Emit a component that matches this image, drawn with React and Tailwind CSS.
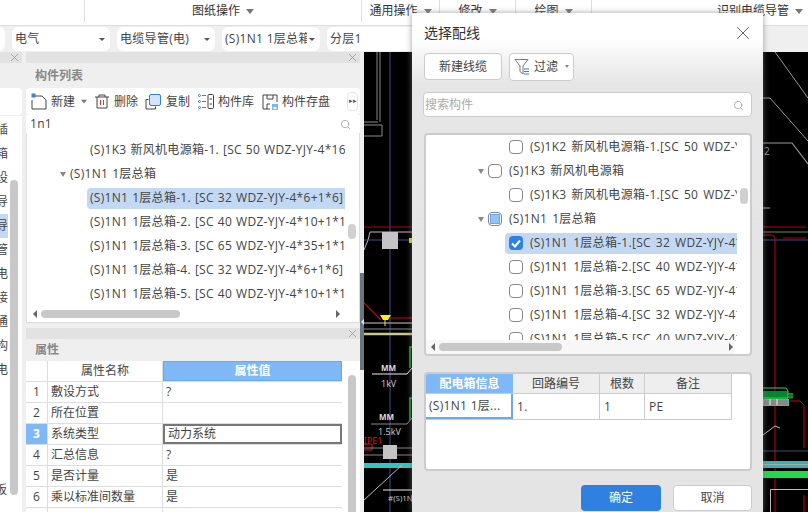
import React from 'react';
import { Search, X } from 'lucide-react';

const font = { fontFamily: '"Open Sans", "Noto Sans CJK SC", sans-serif' };

const Caret = ({ className = '' }) => (
  <span className={`inline-block w-0 h-0 border-x-[4px] border-x-transparent border-t-[5px] border-t-[#777] ${className}`} />
);

const TopSeg = ({ w, label, last }) => (
  <div className={`h-[22px] flex items-center justify-center gap-[6px] shrink-0 ${last ? '' : 'border-r border-[#ddd]'}`} style={{ width: w }}>
    <span>{label}</span>
    {label && <Caret />}
  </div>
);

const Sel = ({ w, label, arrow = true }) => (
  <div className="h-[24px] bg-white rounded-md flex items-center justify-between pl-[3px] pr-[5px] shrink-0 overflow-hidden whitespace-nowrap tracking-[0.3px]" style={{ width: w }}>
    <span className="overflow-hidden">{label}</span>
    {arrow && <span className="w-0 h-0 shrink-0 ml-[2px] border-x-[3px] border-x-transparent border-t-[3px] border-t-[#555]" />}
  </div>
);

const PanelClose = () => <X size={13} strokeWidth={1.5} className="text-[#999]" />;

const leftChars = ['插', '箱', '设', '导', '导', '管', '电', '接', '通', '构', '电'];

const LeftPanel = () => (
  <div className="w-[22px] shrink-0 flex flex-col">
    <div className="h-[11px] bg-[#e2e2e2] flex items-center justify-end pr-[1px]">
      <PanelClose />
    </div>
    <div className="h-[25px] bg-[#efefef]" />
    <div className="h-[27px] bg-white rounded-r-sm mb-[1px]" />
    <div className="flex-1 bg-white relative flex">
      <div className="w-[9px] overflow-hidden pt-[2px]">
        {leftChars.map((c, i) => (
          <div key={i} className={`h-[24px] w-[8px] flex items-center justify-end overflow-hidden ${i === 4 ? 'bg-[#c3d9f3]' : ''}`}>
            <span className="shrink-0">{c}</span>
          </div>
        ))}
        <div className="h-[96px]" />
        <div className="h-[24px] w-[7px] flex items-center justify-end overflow-hidden"><span className="shrink-0">板</span></div>
      </div>
      <div className="absolute left-[10px] top-[64px] w-[8px] h-[315px] bg-[#c8c8c8] rounded" />
    </div>
  </div>
);

const IconNew = () => (
  <svg width="16" height="17" viewBox="0 0 16 17" fill="none">
    <path d="M3 3H11L15 7V16H1V7" stroke="#444" strokeWidth="1" />
    <rect x="0.5" y="0.5" width="4" height="4" fill="#3b82d8" />
  </svg>
);
const IconDel = () => (
  <svg width="14" height="15" viewBox="0 0 14 15" fill="none">
    <path d="M0 3H14M4 3V1H10V3M2 3V14H12V3" stroke="#444" />
    <path d="M5.5 6V11M8.5 6V11" stroke="#d33" />
  </svg>
);
const IconCopy = () => (
  <svg width="16" height="16" viewBox="0 0 16 16" fill="none">
    <path d="M3.5 5.5H1V15H10.5V12.5" stroke="#444" />
    <rect x="4.5" y="0.5" width="11" height="11" rx="1.5" fill="#d4e4fa" stroke="#2f80e0" />
  </svg>
);
const IconLib = () => (
  <svg width="16" height="15" viewBox="0 0 16 15" fill="none">
    <path d="M4 1.5H8M4 7.5H8M4 13.5H8" stroke="#2f80e0" />
    <circle cx="1.5" cy="1.5" r="1" stroke="#2f80e0" /><circle cx="1.5" cy="7.5" r="1" stroke="#2f80e0" /><circle cx="1.5" cy="13.5" r="1" stroke="#2f80e0" />
    <rect x="10" y="0.5" width="5.5" height="14" rx="1" stroke="#444" />
    <path d="M11.5 5H14M11.5 10H14" stroke="#444" />
  </svg>
);
const IconSave = () => (
  <svg width="16" height="16" viewBox="0 0 16 16" fill="none">
    <path d="M8 15H1V1H15V8" stroke="#444" />
    <path d="M5 1V5H11V1M5 15V10H8" stroke="#444" />
    <rect x="10" y="10" width="6" height="6" fill="#7fb4ee" />
    <rect x="11.5" y="13" width="3" height="2" fill="#fff" />
  </svg>
);

const TreeArrow = () => <span className="w-0 h-0 shrink-0 border-x-[3.5px] border-x-transparent border-t-[5px] border-t-[#888]" />;

const HScroll = ({ thumbLeft, thumbW, rightAt, left }) => (
  <>
    <span className="absolute w-0 h-0 border-y-[4px] border-y-transparent border-r-[4px] border-r-[#666] top-1/2 -translate-y-1/2" style={{ left }} />
    <span className="absolute h-[8px] bg-[#c8c8c8] rounded top-1/2 -translate-y-1/2" style={{ left: thumbLeft, width: thumbW }} />
    <span className="absolute w-0 h-0 border-y-[4px] border-y-transparent border-l-[4px] border-l-[#666] top-1/2 -translate-y-1/2" style={{ left: rightAt }} />
  </>
);

const listRows = [
  { t: '(S)1K3 新风机电源箱-1. [SC 50 WDZ-YJY-4*16', lv: 2 },
  { t: '(S)1N1 1层总箱', lv: 1 },
  { t: '(S)1N1 1层总箱-1. [SC 32 WDZ-YJY-4*6+1*6]', lv: 2, on: true },
  { t: '(S)1N1 1层总箱-2. [SC 40 WDZ-YJY-4*10+1*1', lv: 2 },
  { t: '(S)1N1 1层总箱-3. [SC 65 WDZ-YJY-4*35+1*1', lv: 2 },
  { t: '(S)1N1 1层总箱-4. [SC 32 WDZ-YJY-4*6+1*6]', lv: 2 },
  { t: '(S)1N1 1层总箱-5. [SC 40 WDZ-YJY-4*10+1*1', lv: 2 },
];

const ListPanel = () => (
  <div className="h-[271px] flex flex-col shrink-0">
    <div className="h-[11px] bg-[#e2e2e2] flex items-center justify-end pr-[1px]">
      <PanelClose />
    </div>
    <div className="h-[25px] bg-[#efefef] flex items-center pl-[9px] font-bold text-[#888]">构件列表</div>
    <div className="h-[27px] bg-white rounded-sm flex items-center pl-[5px] relative">
      <IconNew />
      <span className="ml-[4px]">新建</span>
      <Caret className="ml-[5px] scale-75" />
      <span className="ml-[7px]"><IconDel /></span>
      <span className="ml-[5px]">删除</span>
      <span className="ml-[7px]"><IconCopy /></span>
      <span className="ml-[5px]">复制</span>
      <span className="ml-[8px]"><IconLib /></span>
      <span className="ml-[4px]">构件库</span>
      <span className="ml-[8px]"><IconSave /></span>
      <span className="ml-[4px]">构件存盘</span>
      <span className="absolute right-[2px] top-[4px] w-[11px] h-[19px] bg-white border border-[#e5e5e5] rounded flex items-center justify-center text-[7px] text-[#555]">▸▸</span>
    </div>
    <div className="h-[18px] bg-white flex items-center justify-between pl-[4px] pr-[9px]">
      <span className="tracking-[0.3px]">1n1</span>
      <Search size={11} className="text-[#aaa]" />
    </div>
    <div className="flex-1 bg-white border border-[#ddd] border-t-0 relative overflow-hidden pt-[5px] tracking-[0.3px] [word-spacing:0.5px]">
      {listRows.map((r, i) => (
        <div key={i} className="h-[24px] flex items-center whitespace-nowrap">
          {r.lv === 1 ? (
            <div className="pl-[33px] flex items-center gap-[4px]"><TreeArrow />{r.t}</div>
          ) : (
            <div className={`ml-[60px] w-[258px] h-[21px] pl-[3px] flex items-center overflow-hidden ${r.on ? 'bg-[#c3d9f3] rounded-l' : ''}`}>{r.t}</div>
          )}
        </div>
      ))}
      <span className="absolute left-[321px] top-[91px] w-[8px] h-[15px] bg-[#d0d0d0] rounded" />
      <div className="absolute left-0 right-0 bottom-0 h-[16px] bg-white">
        <HScroll left={6} thumbLeft={14} thumbW={139} rightAt={309} />
      </div>
    </div>
  </div>
);

const props = [
  ['敷设方式', '?'],
  ['所在位置', ''],
  ['系统类型', '动力系统'],
  ['汇总信息', '?'],
  ['是否计量', '是'],
  ['乘以标准间数量', '是'],
  ['', ''],
];

const PropPanel = () => (
  <div className="flex-1 flex flex-col mt-[5px] overflow-hidden">
    <div className="h-[11px] bg-[#e2e2e2] flex items-center justify-end pr-[1px] shrink-0">
      <PanelClose />
    </div>
    <div className="h-[22px] bg-[#efefef] flex items-center pl-[9px] font-bold text-[#888] shrink-0">属性</div>
    <div className="flex-1 bg-white flex relative">
      <div className="w-[316px]">
        <div className="h-[21px] flex border-b border-[#ddd]">
          <div className="w-[22px] border-r border-[#ddd]" />
          <div className="w-[115px] flex items-center justify-center border-r border-[#ddd]">属性名称</div>
          <div className="flex-1 bg-[#7eb8f7] text-white font-bold flex items-center justify-center border border-[#6aa8ee]">属性值</div>
        </div>
        {props.map(([n, v], i) => (
          <div key={i} className="h-[21px] flex border-b border-[#ddd]">
            <div className={`w-[22px] flex items-center justify-center border-r border-[#ddd] ${i === 2 ? 'bg-[#7eb8f7] text-white font-bold' : ''}`}>{i < 6 ? i + 1 : ''}</div>
            <div className="w-[115px] flex items-center pl-[3px] border-r border-[#ddd]">{n}</div>
            <div className={`flex-1 flex items-center pl-[3px] ${i === 2 ? 'border-2 border-[#777]' : ''}`}>{v}</div>
          </div>
        ))}
      </div>
      <span className="absolute left-[322px] top-[14px] w-[8px] h-[140px] bg-[#c8c8c8] rounded" />
    </div>
  </div>
);

const CadCanvas = () => (
  <svg className="w-[444px] h-[460px] block" viewBox="364 52 444 460" fill="none">
    <rect x="364" y="52" width="444" height="460" fill="#000" />
    <path d="M377 52V120M380 52V122M364 122H378M364 125H382V136H364" stroke="#8a8a8a" />
    <path d="M390 52V512" stroke="#3a4f8f" />
    <path d="M364 227H412" stroke="#b00016" />
    <path d="M364 250L368 240L370 232H412" stroke="#bbb" />
    <path d="M364 240H412" stroke="#3a4f8f" />
    <rect x="382" y="232" width="16" height="17" fill="#c4c4c4" />
    <rect x="409" y="238" width="3" height="5" fill="#d8d820" />
    <path d="M364 303L381 320M390 318H412" stroke="#d00018" strokeWidth="1.2" />
    <path d="M380 315H391L388 320H383Z" fill="#f2f21c" />
    <path d="M385 320V326" stroke="#f2f21c" />
    <path d="M364 323H412" stroke="#ccc" />
    <path d="M364 329H412" stroke="#888" />
    <path d="M364 334H412" stroke="#c8c890" strokeWidth="2.5" />
    <path d="M410 368V347H412M410 420V398H412" stroke="#18b030" strokeWidth="1.5" />
    <path d="M372 374H407L412 368" stroke="#eee" />
    <path d="M371 424H407L412 418" stroke="#888" />
    <text x="381" y="371" fill="#ddd" fontSize="8" fontWeight="700">MM</text>
    <text x="381" y="387" fill="#ccc" fontSize="9">1kV</text>
    <text x="379" y="420" fill="#ddd" fontSize="8" fontWeight="700">MM</text>
    <text x="378" y="435" fill="#ccc" fontSize="9">1.5kV</text>
    <text x="364" y="444" fill="#e01020" fontSize="9">[PE1</text>
    <path d="M364 444H372V450H364" stroke="#e01020" />
    <path d="M364 448H412M364 455H412" stroke="#888" />
    <rect x="383" y="445" width="14" height="14" fill="#c4c4c4" />
    <path d="M364 465.5H412" stroke="#35c4c4" strokeWidth="5" />
    <path d="M364 500L402 465" stroke="#bbb" />
    <path d="M383 490H412" stroke="#eee" />
    <text x="388" y="501" fill="#ccc" fontSize="8">#(S)1N</text>
    <path d="M412 495V502" stroke="#18b030" strokeWidth="1.5" />
    <path d="M775 52L808 98M763 98H770L808 141" stroke="#999" />
    <path d="M763 143H792L808 164" stroke="#999" strokeWidth="1.2" />
    <text x="764" y="155" fill="#999" fontSize="10">2</text>
    <path d="M763 208H770" stroke="#aaa" />
    <path d="M763 227H806M783 238H806" stroke="#b00016" />
    <path d="M763 232H808" stroke="#6f8f3a" />
    <path d="M763 240H808" stroke="#3a4f8f" />
    <path d="M763 235H771Q775 235 775 240V512" stroke="#c80018" />
    <rect x="763" y="391" width="25" height="8" fill="#083" />
    <path d="M763 388H786L788 391V398H763" stroke="#22e040" />
    <path d="M790 393V399M792 393V399M788 394H793M788 397H793" stroke="#22e040" strokeWidth="0.8" />
    <rect x="763.5" y="399.5" width="25" height="6" fill="#888" stroke="#35c4c4" />
    <path d="M770 399V405M777 399V405" stroke="#eee" />
    <path d="M790 401H800L804 405V448" stroke="#c80018" />
    <path d="M763 435L775 426L780 428" stroke="#bbb" />
    <path d="M763 451H808" stroke="#3a4f6f" />
    <rect x="763" y="461" width="45" height="7" fill="#35b4b4" />
    <path d="M763 464.5H808" stroke="#aaa" />
    <rect x="763" y="471" width="45" height="7" fill="#1fdc4a" />
    <path d="M770.5 512V489.5H808" stroke="#bbb" />
    <path d="M804 495V512" stroke="#c80018" />
  </svg>
);

const Check = ({ state }) => {
  if (state === 'on') {
    return (
      <span className="w-[14px] h-[14px] shrink-0 rounded-sm bg-[#2f80e0] flex items-center justify-center">
        <svg width="10" height="9" viewBox="0 0 10 9" fill="none"><path d="M1 4.5L4 7.5L9 1.5" stroke="#fff" strokeWidth="2" /></svg>
      </span>
    );
  }
  return (
    <span className="w-[14px] h-[14px] shrink-0 rounded-sm border border-[#888] bg-white flex items-center justify-center">
      {state === 'mid' && <span className="w-[10px] h-[10px] bg-[#94c1f7] border border-[#6aa8ee]" />}
    </span>
  );
};

const dlgRows = [
  { t: '(S)1K2 新风机电源箱-1.[SC 50 WDZ-YJY-4*16', lv: 2 },
  { t: '(S)1K3 新风机电源箱', lv: 1 },
  { t: '(S)1K3 新风机电源箱-1.[SC 50 WDZ-YJY-4*16', lv: 2 },
  { t: '(S)1N1 1层总箱', lv: 1, state: 'mid' },
  { t: '(S)1N1 1层总箱-1.[SC 32 WDZ-YJY-4*6+1*6]', lv: 2, state: 'on' },
  { t: '(S)1N1 1层总箱-2.[SC 40 WDZ-YJY-4*10+1*1', lv: 2 },
  { t: '(S)1N1 1层总箱-3.[SC 65 WDZ-YJY-4*35+1*1', lv: 2 },
  { t: '(S)1N1 1层总箱-4.[SC 32 WDZ-YJY-4*6+1*6]', lv: 2 },
  { t: '(S)1N1 1层总箱-5.[SC 40 WDZ-YJY-4*10+1*1', lv: 2 },
];

const Dialog = () => (
  <div className="absolute left-[412px] top-[13px] w-[351px] h-[499px] bg-[linear-gradient(to_bottom,#fff_0px,#fff_25px,#e6e6e6_70px,#e4e4e4_100%)] shadow-[0_0_6px_rgba(120,120,120,0.7)] flex flex-col pl-[12px] pr-[11px]">
    <div className="h-[39px] flex items-center justify-between shrink-0">
      <span className="text-[14px] text-[#333]">选择配线</span>
      <X size={22} strokeWidth={1} className="text-[#555] -mr-[2px]" />
    </div>
    <div className="flex gap-[7px] shrink-0 items-center h-[29px]">
      <div className="w-[78px] h-[27px] bg-white border border-[#ccc] rounded flex items-center justify-center">新建线缆</div>
      <div className="w-[65px] h-[28px] bg-white border border-[#ccc] rounded flex items-center pl-[4px] gap-[5px]">
        <svg width="15" height="18" viewBox="0 0 15 18" fill="none">
          <path d="M1 1.5H14L9 8V16L6 13.5V8Z" stroke="#777" fill="#fff" />
          <path d="M10 11H15M10 13.5H15M10 16H15" stroke="#2f80e0" />
        </svg>
        <span>过滤</span>
        <span className="w-0 h-0 ml-[2px] border-x-[2.5px] border-x-transparent border-t-[3px] border-t-[#888]" />
      </div>
    </div>
    <div className="mt-[11px] -ml-[1px] h-[25px] bg-white border border-[#ccc] rounded flex items-center justify-between pl-[1px] pr-[7px] pt-[1px] text-[#aaa] shrink-0">
      <span>搜索构件</span>
      <Search size={11} className="text-[#aaa]" />
    </div>
    <div className="mt-[16px] h-[223px] bg-white border-2 border-[#ccc] rounded-sm relative overflow-hidden shrink-0 tracking-[0.3px] [word-spacing:1.5px]">
      <div>
        {dlgRows.map((r, i) => (
          <div key={i} className="h-[24px] flex items-center whitespace-nowrap">
            {r.lv === 1 ? (
              <div className="pl-[52px] flex items-center gap-[4px]">
                <TreeArrow />
                <Check state={r.state} />
                <span className="ml-[3px]">{r.t}</span>
              </div>
            ) : (
              <div className={`ml-[79px] w-[232px] h-[21px] pl-[4px] flex items-center gap-[7px] overflow-hidden shrink-0 ${r.state === 'on' ? 'bg-[#c3d9f3] rounded-l' : ''}`}>
                <Check state={r.state} />
                <span>{r.t}</span>
              </div>
            )}
          </div>
        ))}
      </div>
      <span className="absolute left-[314px] top-[53px] w-[8px] h-[16px] bg-[#d0d0d0] rounded" />
      <div className="absolute left-0 right-[15px] bottom-0 h-[14px] bg-[#f7f7f7]">
        <HScroll left={5} thumbLeft={13} thumbW={123} rightAt={303} />
      </div>
    </div>
    <div className="mt-[16px] h-[99px] bg-white border-2 border-[#ccc] rounded-sm shrink-0 overflow-hidden">
      <div className="flex h-[20px] w-[306px] border-b border-[#ccc]">
        <div className="w-[87px] bg-[#7eb8f7] text-white font-bold flex items-center justify-center">配电箱信息</div>
        <div className="w-[87px] bg-[#eee] border-r border-[#ccc] flex items-center justify-center">回路编号</div>
        <div className="w-[45px] bg-[#eee] border-r border-[#ccc] flex items-center justify-center">根数</div>
        <div className="w-[87px] bg-[#eee] border-r border-[#ccc] flex items-center justify-center">备注</div>
      </div>
      <div className="flex h-[26px] w-[306px] border-b border-[#ccc] tracking-[0.3px]">
        <div className="w-[87px] border-2 border-[#6aa8ee] border-t-0 border-l-0 pl-[3px] flex items-center whitespace-nowrap overflow-hidden">(S)1N1 1层...</div>
        <div className="w-[87px] border-r border-[#ccc] pl-[4px] flex items-center">1.</div>
        <div className="w-[45px] border-r border-[#ccc] pl-[4px] flex items-center">1</div>
        <div className="w-[87px] border-r border-[#ccc] pl-[4px] flex items-center">PE</div>
      </div>
    </div>
    <div className="mt-[14px] flex justify-end gap-[12px] shrink-0">
      <div className="w-[80px] h-[26px] bg-[#2f80e0] text-white rounded flex items-center justify-center">确定</div>
      <div className="w-[79px] h-[26px] bg-white border border-[#ccc] rounded flex items-center justify-center">取消</div>
    </div>
  </div>
);

export default function App() {
  return (
    <div className="w-[808px] h-[512px] relative overflow-hidden bg-[#efefef] text-[12px] text-[#444] flex flex-col" style={font}>
      <div className="h-[26px] bg-white flex shrink-0 border-b border-[#ddd] text-[#333]">
        <TopSeg w={85} label="" />
        <TopSeg w={277} label="图纸操作" />
        <TopSeg w={78} label="通用操作" />
        <TopSeg w={76} label="修改" />
        <TopSeg w={76} label="绘图" />
        <div className="flex-1 h-[22px] flex items-center justify-end gap-[6px] pr-[5px]">
          <span>识别电缆导管</span>
          <Caret />
        </div>
      </div>
      <div className="h-[26px] flex items-center gap-[7px] pl-0 shrink-0 -ml-[93px]">
        <Sel w={98} label="" arrow={false} />
        <Sel w={98} label="电气" />
        <Sel w={98} label="电缆导管(电)" />
        <Sel w={98} label="(S)1N1 1层总箱" />
        <Sel w={100} label="分层1" arrow={false} />
      </div>
      <div className="flex-1 flex min-h-0">
        <LeftPanel />
        <div className="w-[4px] shrink-0" />
        <div className="w-[334px] shrink-0 flex flex-col">
          <ListPanel />
          <PropPanel />
        </div>
        <div className="w-[4px] shrink-0 flex flex-col">
          <div className="h-[221px]" />
          <div className="h-[97px] bg-[#6b7580] flex items-center justify-center">
            <span className="w-0 h-0 border-y-[3px] border-y-transparent border-r-[3px] border-r-[#ddd]" />
          </div>
        </div>
        <CadCanvas />
      </div>
      <Dialog />
    </div>
  );
}
